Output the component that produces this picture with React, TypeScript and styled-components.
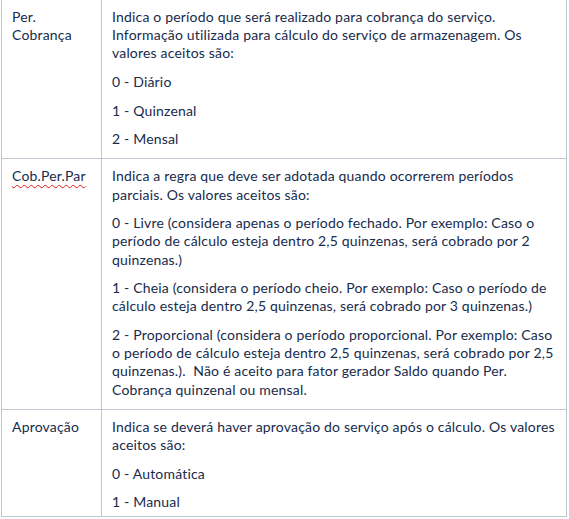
import React from 'react'
import styled, { createGlobalStyle } from 'styled-components'

const GlobalStyle = createGlobalStyle`
  html, body {
    margin: 0;
    padding: 0;
    background: #ffffff;
  }
  body {
    font-family: Lato, "Noto Sans", "Liberation Sans", sans-serif;
    color: #172b4d;
  }
`

interface Field {
  name: string,
  misspelled?: boolean,
  paragraphs: string[]
}

const fields: Field[] = [
  {
    name: 'Per. Cobrança',
    paragraphs: [
      'Indica o período que será realizado para cobrança do serviço. Informação utilizada para cálculo do serviço de armazenagem. Os valores aceitos são:',
      '0 - Diário',
      '1 - Quinzenal',
      '2 - Mensal'
    ]
  },
  {
    name: 'Cob.Per.Par',
    misspelled: true,
    paragraphs: [
      'Indica a regra que deve ser adotada quando ocorrerem períodos parciais. Os valores aceitos são:',
      '0 - Livre (considera apenas o período fechado. Por exemplo: Caso o período de cálculo esteja dentro 2,5 quinzenas, será cobrado por 2 quinzenas.)',
      '1 - Cheia (considera o período cheio. Por exemplo: Caso o período de cálculo esteja dentro 2,5 quinzenas, será cobrado por 3 quinzenas.)',
      '2 - Proporcional (considera o período proporcional. Por exemplo: Caso o período de cálculo esteja dentro 2,5 quinzenas, será cobrado por 2,5 quinzenas.).\u00a0 Não é aceito para fator gerador Saldo quando Per. Cobrança quinzenal ou mensal.'
    ]
  },
  {
    name: 'Aprovação',
    paragraphs: [
      'Indica se deverá haver aprovação do serviço após o cálculo. Os valores aceitos são:',
      '0 - Automática',
      '1 - Manual'
    ]
  }
]

const App: React.FC = () => {
  return (
    <>
      <GlobalStyle />
      <Table>
        <tbody>
          {fields.map(f =>
            <Row key={f.name}>
              <NameCell>
                <Text>{f.misspelled ? <Squiggle>{f.name}</Squiggle> : f.name}</Text>
              </NameCell>
              <DescCell>
                {f.paragraphs.map((p, i) => <Text key={i}>{p}</Text>)}
              </DescCell>
            </Row>
          )}
        </tbody>
      </Table>
    </>
  )
}

export default App

const Table = styled.table`
  border-collapse: collapse;
  table-layout: fixed;
  width: 566px;
  margin: -1px 0 0 1px;
  font-size: 14px;
  line-height: 18.2px;
  letter-spacing: 0.18px;
`
const Cell = styled.td`
  border: 1px solid #c1c7d0;
  padding: 8px 10px 10px 10px;
  vertical-align: top;
`
const Row = styled.tr`
  &:last-child ${Cell} {
    padding-bottom: 5px;
  }
`
const NameCell = styled(Cell)`
  width: 79px;
`
const DescCell = styled(Cell)``

const Text = styled.p`
  margin: 10.4px 0 0 0;
  &:first-child {
    margin-top: 0;
  }
`
const Squiggle = styled.span`
  text-decoration: underline wavy #e01b1b;
  text-decoration-thickness: 1px;
  text-underline-offset: 3px;
  text-decoration-skip-ink: none;
`
